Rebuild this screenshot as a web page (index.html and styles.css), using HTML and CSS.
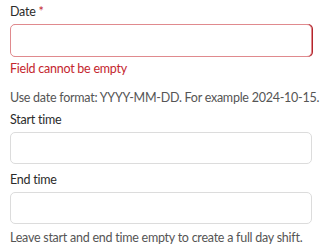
FILE: index.html
```html
<!DOCTYPE html>
<html lang="en">
<head>
    <meta charset="UTF-8">
    <meta name="viewport" content="width=device-width, initial-scale=1.0">
    <title>Shift date</title>
    <link rel="stylesheet" href="styles.css">
</head>
<body>
    <form class="shift-form">
        <div class="field field-date">
            <label class="label" for="date">Date <span class="req">*</span></label>
            <input class="input input-error" type="text" id="date">
            <p class="error">Field cannot be empty</p>
            <p class="hint">Use date format: YYYY-MM-DD. For example 2024-10-15.</p>
        </div>

        <div class="field">
            <label class="label" for="start">Start time</label>
            <input class="input" type="text" id="start">
        </div>

        <div class="field">
            <label class="label" for="end">End time</label>
            <input class="input" type="text" id="end">
            <p class="hint">Leave start and end time empty to create a full day shift.</p>
        </div>
    </form>
</body>
</html>
```

FILE: styles.css
```css
body {
    margin: 0;
    font-family: "Lato", "Open Sans", sans-serif;
    font-size: 12.5px;
    letter-spacing: -0.25px;
    color: #333;
    background: #fff;
}

.shift-form {
    padding: 2px 10px 0 10px;
    width: 302px;
}

.field {
    display: flex;
    flex-direction: column;
    margin-bottom: 6px;
}

.field-date { margin-bottom: 2px; }

.label {
    line-height: 20px;
    color: #2b2b2b;
}

.req { color: #c4262e; }

.input {
    box-sizing: border-box;
    height: 32px;
    margin-top: 2px;
    border: 1px solid #dcdcdc;
    border-radius: 5px;
    font: inherit;
}

.input-error {
    height: 33px;
    border-color: #e08a8e;
    border-width: 1.5px;
    box-shadow: 1px 0 0 #b3262d;
}

.error {
    margin: 2px 0 0;
    line-height: 20px;
    color: #c4262e;
}

.hint {
    margin: 9px 0 0;
    line-height: 20px;
    color: #555;
    white-space: nowrap;
}

.field:last-child .hint { margin-top: 4px; }
```
